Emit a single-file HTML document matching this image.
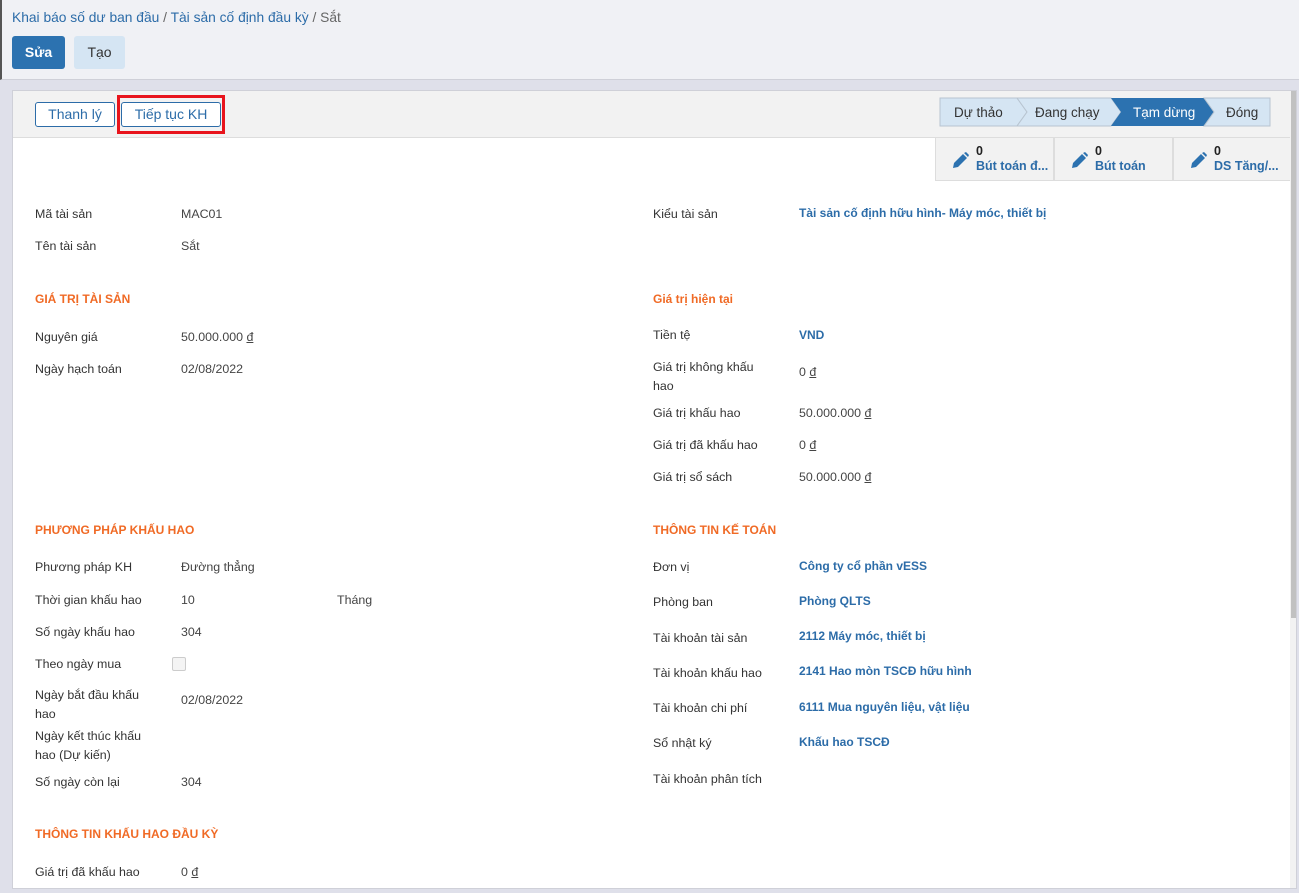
<!DOCTYPE html><html><head><meta charset="utf-8"><style>
*{box-sizing:border-box;margin:0;padding:0}
html,body{width:1299px;height:893px;overflow:hidden}
body{background:#dfe0ea;font-family:"Liberation Sans",sans-serif;font-size:13px;color:#333;position:relative}
.top{position:absolute;left:0;top:0;width:1299px;height:80px;background:#f0f1f5;border-bottom:1px solid #cfd0d8;border-left:2px solid #555}
.a{position:absolute;white-space:nowrap}
.bc{left:12px;top:10px;font-size:13.8px;color:#2c6ca8}
.bc span{color:#666}
.btn{position:absolute;height:33px;border-radius:3px;font-size:14px;line-height:33px;text-align:center}
.sheet{position:absolute;left:12px;top:90px;width:1285px;height:799px;background:#fff;border:1px solid #cfd0d8}
.hdr{position:absolute;left:0;top:0;width:100%;height:47px;background:#f2f2f2;border-bottom:1px solid #ddd}
.ob{position:absolute;top:11px;height:25px;border:1px solid #2c6ca8;border-radius:3px;background:#fff;color:#2c6ca8;font-size:14px;line-height:23px;text-align:center}
.l,.v,.b,.h{position:absolute;white-space:nowrap}
.l{color:#333;font-size:12.4px;line-height:19px}
.v{color:#444;font-size:12.4px;line-height:19px}
.b{color:#2c6ca8;font-weight:bold;font-size:12px;line-height:19px}
.h{color:#f06a25;font-weight:bold;font-size:12px}
u{text-decoration:underline}
.sb{position:absolute;width:119px;height:43px;top:47px;background:#f2f2f2;border:1px solid #ddd;border-top:none}
.sb .n{position:absolute;left:40px;top:6px;font-weight:bold;font-size:12.5px;color:#222}
.sb .t{position:absolute;left:40px;top:21px;font-weight:bold;font-size:12.5px;color:#2c6ca8}
.sb svg{position:absolute;left:14px;top:13px}
</style></head><body>
<div class="top"></div>
<div class="a bc">Khai báo số dư ban đầu <span>/</span> Tài sản cố định đầu kỳ <span>/ Sắt</span></div>
<div class="btn" style="left:12px;top:36px;width:53px;background:#2c72b0;color:#fff;font-weight:bold">Sửa</div>
<div class="btn" style="left:74px;top:36px;width:51px;background:#d5e5f3;color:#333">Tạo</div>
<div class="sheet">
<div class="hdr"></div>
<div class="ob" style="left:22px;width:80px">Thanh lý</div>
<div style="position:absolute;left:104px;top:4px;width:108px;height:39px;border:3px solid #e8141c"></div>
<div class="ob" style="left:108px;width:100px">Tiếp tục KH</div>
<svg style="position:absolute;left:926px;top:6px" width="332" height="30">
<path d="M1 1H78L88 15L78 29H1Z" fill="#d5e5f3" stroke="#b8c4d0"/>
<path d="M78 1H172L182 15L172 29H78L88 15Z" fill="#d5e5f3" stroke="#b8c4d0"/>
<path d="M172 1H265L275 15L265 29H172L182 15Z" fill="#2c72b0"/>
<path d="M265 1H331V29H265L275 15Z" fill="#d5e5f3" stroke="#b8c4d0"/>
<text x="15" y="20" font-size="13.5" fill="#333" font-family="Liberation Sans">Dự thảo</text>
<text x="96" y="20" font-size="13.5" fill="#333" font-family="Liberation Sans">Đang chạy</text>
<text x="194" y="20" font-size="13.5" fill="#fff" font-family="Liberation Sans">Tạm dừng</text>
<text x="287" y="20" font-size="13.5" fill="#333" font-family="Liberation Sans">Đóng</text>
</svg>
<div class="sb" style="left:922px"><svg width="20" height="20" viewBox="0 0 20 20"><path d="M3 17l1-5L13 3l4 4-9 9z" fill="#2c72b0"/><path d="M14 2l2-1 3 3-1 2z" fill="#2c72b0"/></svg><div class="n">0</div><div class="t">Bút toán đ...</div></div>
<div class="sb" style="left:1041px"><svg width="20" height="20" viewBox="0 0 20 20"><path d="M3 17l1-5L13 3l4 4-9 9z" fill="#2c72b0"/><path d="M14 2l2-1 3 3-1 2z" fill="#2c72b0"/></svg><div class="n">0</div><div class="t">Bút toán</div></div>
<div class="sb" style="left:1160px;width:118px"><svg width="20" height="20" viewBox="0 0 20 20"><path d="M3 17l1-5L13 3l4 4-9 9z" fill="#2c72b0"/><path d="M14 2l2-1 3 3-1 2z" fill="#2c72b0"/></svg><div class="n">0</div><div class="t">DS Tăng/...</div></div>
<div style="position:absolute;right:0;top:0;width:6px;height:797px;background:#f2f2f2"></div>
<div style="position:absolute;right:0;top:0;width:5px;height:527px;background:#c1c1c1"></div>
</div>
<div style="position:absolute;left:0;top:0;width:1299px;height:893px">
<div class="l" style="left:35px;top:205px">Mã tài sản</div><div class="v" style="left:181px;top:205px">MAC01</div>
<div class="l" style="left:35px;top:237px">Tên tài sản</div><div class="v" style="left:181px;top:237px">Sắt</div>
<div class="h" style="left:35px;top:292px">GIÁ TRỊ TÀI SẢN</div>
<div class="l" style="left:35px;top:328px">Nguyên giá</div><div class="v" style="left:181px;top:328px">50.000.000 <u>đ</u></div>
<div class="l" style="left:35px;top:360px">Ngày hạch toán</div><div class="v" style="left:181px;top:360px">02/08/2022</div>
<div class="h" style="left:35px;top:523px">PHƯƠNG PHÁP KHẤU HAO</div>
<div class="l" style="left:35px;top:558px">Phương pháp KH</div><div class="v" style="left:181px;top:558px">Đường thẳng</div>
<div class="l" style="left:35px;top:591px">Thời gian khấu hao</div><div class="v" style="left:181px;top:591px">10</div><div class="v" style="left:337px;top:591px">Tháng</div>
<div class="l" style="left:35px;top:623px">Số ngày khấu hao</div><div class="v" style="left:181px;top:623px">304</div>
<div class="l" style="left:35px;top:655px">Theo ngày mua</div><div style="position:absolute;left:172px;top:657px;width:14px;height:14px;border:1px solid #ccc;background:#f4f4f4;border-radius:2px"></div>
<div class="l" style="left:35px;top:686px">Ngày bắt đầu khấu<br>hao</div><div class="v" style="left:181px;top:691px">02/08/2022</div>
<div class="l" style="left:35px;top:727px">Ngày kết thúc khấu<br>hao (Dự kiến)</div>
<div class="l" style="left:35px;top:773px">Số ngày còn lại</div><div class="v" style="left:181px;top:773px">304</div>
<div class="h" style="left:35px;top:827px">THÔNG TIN KHẤU HAO ĐẦU KỲ</div>
<div class="l" style="left:35px;top:863px">Giá trị đã khấu hao</div><div class="v" style="left:181px;top:863px">0 <u>đ</u></div>

<div class="l" style="left:653px;top:205px">Kiểu tài sản</div><div class="b" style="left:799px;top:204px">Tài sản cố định hữu hình- Máy móc, thiết bị</div>
<div class="h" style="left:653px;top:292px">Giá trị hiện tại</div>
<div class="l" style="left:653px;top:326px">Tiền tệ</div><div class="b" style="left:799px;top:326px">VND</div>
<div class="l" style="left:653px;top:358px">Giá trị không khấu<br>hao</div><div class="v" style="left:799px;top:363px">0 <u>đ</u></div>
<div class="l" style="left:653px;top:404px">Giá trị khấu hao</div><div class="v" style="left:799px;top:404px">50.000.000 <u>đ</u></div>
<div class="l" style="left:653px;top:436px">Giá trị đã khấu hao</div><div class="v" style="left:799px;top:436px">0 <u>đ</u></div>
<div class="l" style="left:653px;top:468px">Giá trị sổ sách</div><div class="v" style="left:799px;top:468px">50.000.000 <u>đ</u></div>
<div class="h" style="left:653px;top:523px">THÔNG TIN KẾ TOÁN</div>
<div class="l" style="left:653px;top:558px">Đơn vị</div><div class="b" style="left:799px;top:557px">Công ty cổ phần vESS</div>
<div class="l" style="left:653px;top:593px">Phòng ban</div><div class="b" style="left:799px;top:592px">Phòng QLTS</div>
<div class="l" style="left:653px;top:629px">Tài khoản tài sản</div><div class="b" style="left:799px;top:627px">2112 Máy móc, thiết bị</div>
<div class="l" style="left:653px;top:664px">Tài khoản khấu hao</div><div class="b" style="left:799px;top:662px">2141 Hao mòn TSCĐ hữu hình</div>
<div class="l" style="left:653px;top:699px">Tài khoản chi phí</div><div class="b" style="left:799px;top:698px">6111 Mua nguyên liệu, vật liệu</div>
<div class="l" style="left:653px;top:734px">Sổ nhật ký</div><div class="b" style="left:799px;top:733px">Khấu hao TSCĐ</div>
<div class="l" style="left:653px;top:770px">Tài khoản phân tích</div>
</div>
</body></html>
